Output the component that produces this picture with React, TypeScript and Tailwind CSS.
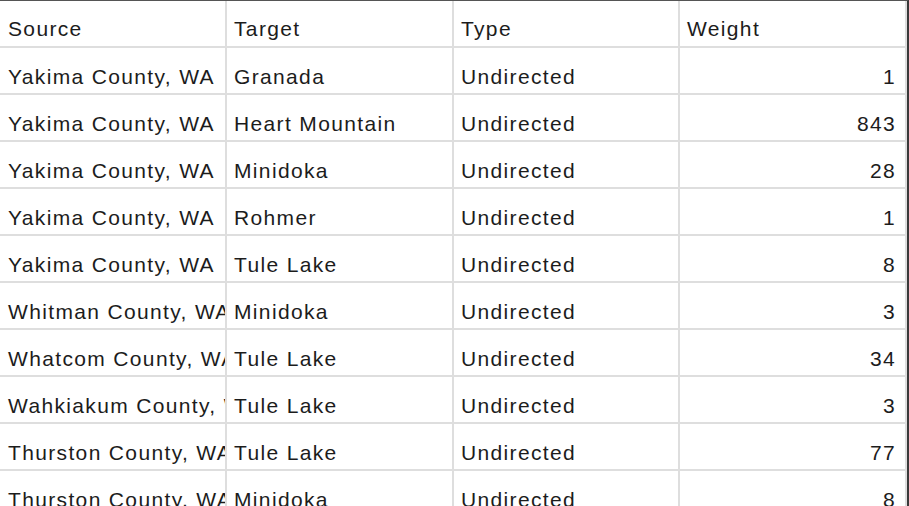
import React from "react";

const rows: [string, string, string, string][] = [
  ["Yakima County, WA", "Granada", "Undirected", "1"],
  ["Yakima County, WA", "Heart Mountain", "Undirected", "843"],
  ["Yakima County, WA", "Minidoka", "Undirected", "28"],
  ["Yakima County, WA", "Rohmer", "Undirected", "1"],
  ["Yakima County, WA", "Tule Lake", "Undirected", "8"],
  ["Whitman County, WA", "Minidoka", "Undirected", "3"],
  ["Whatcom County, WA", "Tule Lake", "Undirected", "34"],
  ["Wahkiakum County, WA", "Tule Lake", "Undirected", "3"],
  ["Thurston County, WA", "Tule Lake", "Undirected", "77"],
  ["Thurston County, WA", "Minidoka", "Undirected", "8"],
];

const cell =
  "overflow-hidden whitespace-nowrap border-r-2 border-b-2 border-[#dedede] leading-[24px]";
const body = `${cell} pt-[17px] pb-[4px]`;
const head = `${cell} pt-[16px] pb-[5px]`;

export default function App() {
  return (
    <div className="w-[909px] h-[506px] overflow-hidden bg-white border-t border-t-[#555555] border-r-2 border-r-[#3a3a3a] text-[21px] tracking-[1.35px] text-[#1c1c1c] font-['Liberation_Sans',Arial,sans-serif]">
      <div className="grid grid-cols-[227px_227px_226px_227px]">
        <div className={`${head} pl-[8px]`}>Source</div>
        <div className={`${head} pl-[7px]`}>Target</div>
        <div className={`${head} pl-[7px]`}>Type</div>
        <div className={`${head} pl-[7px]`}>Weight</div>
        {rows.map((r, i) => (
          <React.Fragment key={i}>
            <div className={`${body} pl-[8px]`}>{r[0]}</div>
            <div className={`${body} pl-[7px]`}>{r[1]}</div>
            <div className={`${body} pl-[7px]`}>{r[2]}</div>
            <div className={`${body} pr-[9px] text-right`}>{r[3]}</div>
          </React.Fragment>
        ))}
      </div>
    </div>
  );
}
